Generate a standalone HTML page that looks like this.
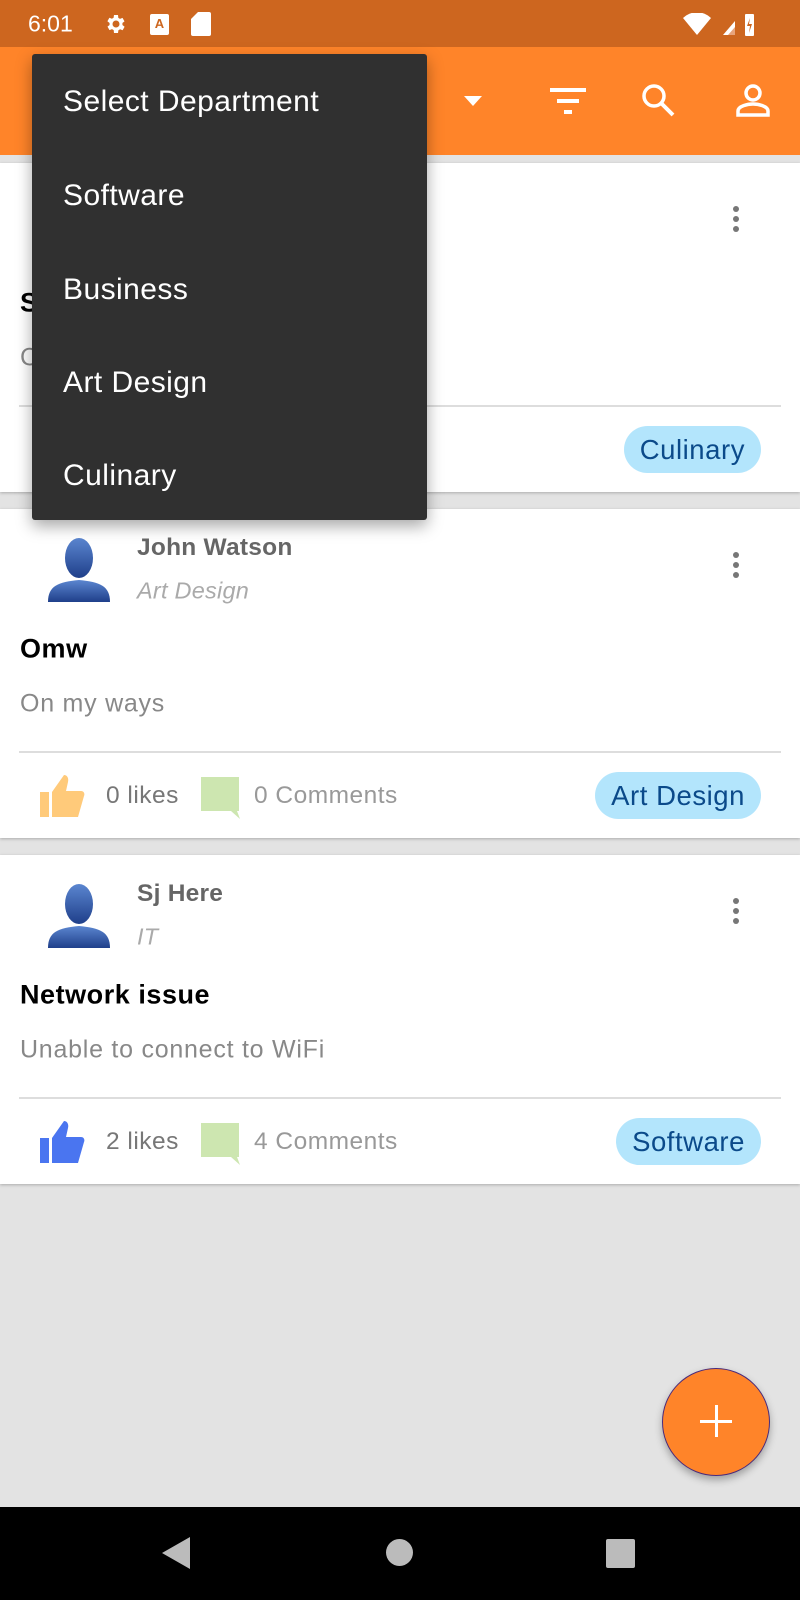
<!DOCTYPE html>
<html><head><meta charset="utf-8"><style>
*{margin:0;padding:0;box-sizing:border-box}
body{width:800px;height:1600px;overflow:hidden;background:#e3e3e3;font-family:"Liberation Sans",Roboto,sans-serif;position:relative}
.abs{position:absolute}
.t{position:absolute;white-space:nowrap;line-height:1;transform:translateY(-50%)}
.card{position:absolute;left:0;width:800px;height:329px;background:#fff;box-shadow:0 1px 3px rgba(0,0,0,.25)}
.name{left:137px;top:39px;font-size:24.5px;font-weight:bold;color:#666;letter-spacing:0.01em}
.dept{left:137px;top:82px;font-size:23.5px;font-style:italic;color:#aaa;letter-spacing:0.01em}
.title{left:20px;top:140px;font-size:27px;font-weight:bold;color:#000;letter-spacing:0.02em}
.body{left:20px;top:195px;font-size:25px;color:#888;letter-spacing:0.03em}
.div{position:absolute;left:19px;right:19px;top:242px;height:2px;background:#ddd}
.ft{top:287px;font-size:24.5px;color:#777;letter-spacing:0.02em}
.chip{position:absolute;right:39px;top:263px;height:47px;border-radius:24px;background:#b3e5fc;color:#0b4a8a;font-size:27.5px;line-height:47px;padding:0 16px;letter-spacing:0.02em}
.dots{position:absolute;left:733px;top:43px;width:6px}
.dots i{display:block;width:6px;height:6px;border-radius:50%;background:#777;margin-bottom:4px}
.mi{position:absolute;left:31px;font-size:30px;color:#fff;line-height:1;transform:translateY(-50%);letter-spacing:0.015em}
</style></head><body>
<div class="abs" style="left:0;top:0;width:800px;height:47px;background:#cd661f"></div>
<div class="t" style="left:28px;top:24px;font-size:23px;color:#fff">6:01</div>
<svg class="abs" style="left:103px;top:12px" width="24" height="24" viewBox="0 0 24 24"><path fill="#fff" d="M19.4 13a7.5 7.5 0 000-2l2.1-1.6-2-3.5-2.5 1a7 7 0 00-1.7-1L15 3h-4l-.4 2.7a7 7 0 00-1.7 1l-2.5-1-2 3.5L6.6 11a7.5 7.5 0 000 2l-2.1 1.6 2 3.5 2.5-1a7 7 0 001.7 1L11 21h4l.4-2.7a7 7 0 001.7-1l2.5 1 2-3.5zM13 15.5a3.5 3.5 0 110-7 3.5 3.5 0 010 7z"/></svg>
<div class="abs" style="left:150px;top:14px;width:19px;height:21px;background:#fff;border-radius:2px;color:#cd661f;font-size:13px;font-weight:bold;text-align:center;line-height:19px">A</div>
<svg class="abs" style="left:191px;top:12px" width="20" height="24" viewBox="0 0 20 24"><path fill="#fff" d="M7 0h11a2 2 0 012 2v20a2 2 0 01-2 2H2a2 2 0 01-2-2V7z"/></svg>
<svg class="abs" style="left:683px;top:13px" width="72" height="24" viewBox="0 0 72 24"><path fill="#fff" d="M0 5a20 20 0 0128 0L14 22z"/><path fill="#fff" d="M40 22L52 8v14z"/><path fill="#e8a37a" d="M45 22l7-8v8z"/><rect x="62" y="1" width="9" height="22" rx="1" fill="#fff"/><path fill="#cd661f" d="M67 5l-3 8h3l-1 7 3-9h-3z"/></svg>
<div class="abs" style="left:0;top:47px;width:800px;height:108px;background:#ff8429"></div>
<svg class="abs" style="left:464px;top:96px" width="18" height="10"><path d="M0 0h18L9 10z" fill="#fff"/></svg>
<svg class="abs" style="left:550px;top:88px" width="36" height="28"><rect x="0" y="0" width="36" height="4" fill="#fff"/><rect x="7" y="11" width="22" height="4" fill="#fff"/><rect x="14" y="22" width="8" height="4" fill="#fff"/></svg>
<svg class="abs" style="left:640px;top:82px" width="38" height="38"><circle cx="14" cy="14" r="10" stroke="#fff" stroke-width="3.5" fill="none"/><path d="M21 21l12 12" stroke="#fff" stroke-width="4"/></svg>
<svg class="abs" style="left:736px;top:84px" width="34" height="34"><circle cx="17" cy="9" r="7" stroke="#fff" stroke-width="3.5" fill="none"/><path d="M2 31v-4c0-5 10-7 15-7s15 2 15 7v4z" stroke="#fff" stroke-width="3.5" fill="none"/></svg>

<div class="card" style="top:163px">
 <div class="dots" style="top:43px"><i></i><i></i><i></i></div>
 <div class="t title" style="top:140px">S</div>
 <div class="t body">C</div>
 <div class="div"></div>
 <div class="chip">Culinary</div>
</div>

<div class="card" style="top:509px">
 <svg class="abs" style="left:46px;top:27px" width="66" height="68" viewBox="0 0 66 68"><defs><linearGradient id="g" x1="0" y1="0" x2="0" y2="1"><stop offset="0" stop-color="#5b86d0"/><stop offset="1" stop-color="#1f3f8a"/></linearGradient></defs><ellipse cx="33" cy="22" rx="14" ry="20" fill="url(#g)"/><path d="M2 66c0-16 10-20 31-22 21 2 31 6 31 22z" fill="url(#g)"/></svg>
 <div class="t name">John Watson</div>
 <div class="t dept">Art Design</div>
 <div class="dots"><i></i><i></i><i></i></div>
 <div class="t title">Omw</div>
 <div class="t body">On my ways</div>
 <div class="div"></div>
 <svg class="abs" style="left:40px;top:266px" width="45" height="42" viewBox="0 0 45 42"><rect x="0" y="17" width="9" height="25" fill="#ffca7a"/><path d="M12 17l12-17c3 0 5 3 4 7l-2 9h15c3 0 4 3 3 5l-6 21H12z" fill="#ffca7a"/></svg>
 <div class="t ft" style="left:106px">0 likes</div>
 <svg class="abs" style="left:201px;top:268px" width="40" height="42"><path d="M0 0h38v34h-2l3 8-9-8H0z" fill="#cde6b0"/></svg>
 <div class="t ft" style="left:254px;color:#999">0 Comments</div>
 <div class="chip">Art Design</div>
</div>

<div class="card" style="top:855px">
 <svg class="abs" style="left:46px;top:27px" width="66" height="68" viewBox="0 0 66 68"><ellipse cx="33" cy="22" rx="14" ry="20" fill="url(#g)"/><path d="M2 66c0-16 10-20 31-22 21 2 31 6 31 22z" fill="url(#g)"/></svg>
 <div class="t name">Sj Here</div>
 <div class="t dept">IT</div>
 <div class="dots"><i></i><i></i><i></i></div>
 <div class="t title">Network issue</div>
 <div class="t body">Unable to connect to WiFi</div>
 <div class="div"></div>
 <svg class="abs" style="left:40px;top:266px" width="45" height="42" viewBox="0 0 45 42"><rect x="0" y="17" width="9" height="25" fill="#4a75f0"/><path d="M12 17l12-17c3 0 5 3 4 7l-2 9h15c3 0 4 3 3 5l-6 21H12z" fill="#4a75f0"/></svg>
 <div class="t ft" style="left:106px">2 likes</div>
 <svg class="abs" style="left:201px;top:268px" width="40" height="42"><path d="M0 0h38v34h-2l3 8-9-8H0z" fill="#cde6b0"/></svg>
 <div class="t ft" style="left:254px;color:#999">4 Comments</div>
 <div class="chip">Software</div>
</div>

<div class="abs" style="left:32px;top:54px;width:395px;height:466px;background:#303030;border-radius:3px;box-shadow:0 6px 16px rgba(0,0,0,.35)">
 <div class="mi" style="top:48px">Select Department</div>
 <div class="mi" style="top:142px">Software</div>
 <div class="mi" style="top:236px">Business</div>
 <div class="mi" style="top:329px">Art Design</div>
 <div class="mi" style="top:422px">Culinary</div>
</div>

<div class="abs" style="left:662px;top:1368px;width:108px;height:108px;border-radius:50%;background:#ff8429;border:1.5px solid #4b2a7a;box-shadow:0 4px 8px rgba(0,0,0,.3)"></div>
<div class="abs" style="left:700px;top:1420px;width:32px;height:3px;background:#fff"></div>
<div class="abs" style="left:715px;top:1405px;width:3px;height:32px;background:#fff"></div>

<div class="abs" style="left:0;top:1507px;width:800px;height:93px;background:#000"></div>
<svg class="abs" style="left:162px;top:1537px" width="30" height="32"><path d="M28 0v32L0 16z" fill="#bbb"/></svg>
<div class="abs" style="left:386px;top:1539px;width:27px;height:27px;border-radius:50%;background:#bbb"></div>
<div class="abs" style="left:606px;top:1539px;width:29px;height:29px;border-radius:2px;background:#bbb"></div>
</body></html>
